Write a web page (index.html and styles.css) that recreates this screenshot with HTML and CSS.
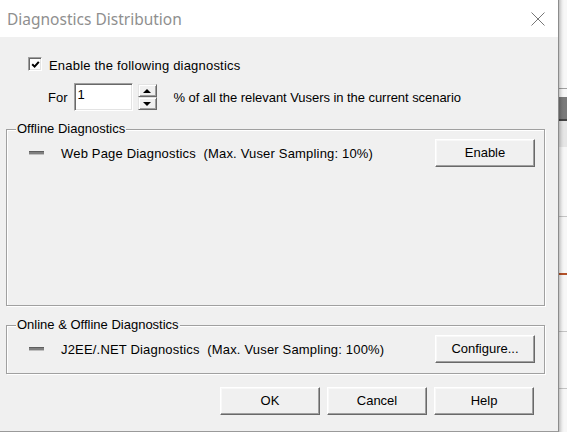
FILE: index.html
```html
<!DOCTYPE html>
<html>
<head>
<meta charset="utf-8">
<link rel="stylesheet" href="styles.css">
</head>
<body>
<div class="screen">
  <div class="dialog">
    <div class="titlebar">
      <span class="title">Diagnostics Distribution</span>
      <svg class="close" width="14" height="14" viewBox="0 0 14 14"><path d="M0.5 0.5 L13.5 13.5 M13.5 0.5 L0.5 13.5" stroke="#777" stroke-width="1" fill="none"/></svg>
    </div>
    <div class="body">
      <div class="check-row">
        <span class="checkbox"><svg width="9" height="9" viewBox="0 0 9 9"><path d="M1.2 4.2 L3.6 6.6 L7.8 1.8" stroke="#000" stroke-width="2" fill="none"/></svg></span>
        <span class="label wide">Enable the following diagnostics</span>
      </div>
      <div class="for-row">
        <span class="label">For</span>
        <span class="edit">1</span>
        <span class="spin">
          <span class="spin-btn"><span class="tri-up"></span></span>
          <span class="spin-btn"><span class="tri-down"></span></span>
        </span>
        <span class="label pct">% of all the relevant Vusers in the current scenario</span>
      </div>
      <div class="group group-offline">
        <span class="legend">Offline Diagnostics</span>
        <div class="item-row">
          <span class="dash"></span>
          <span class="item-text">Web Page Diagnostics&nbsp; (Max. Vuser Sampling: 10%)</span>
          <span class="btn">Enable</span>
        </div>
      </div>
      <div class="group group-online">
        <span class="legend">Online &amp; Offline Diagnostics</span>
        <div class="item-row">
          <span class="dash"></span>
          <span class="item-text">J2EE/.NET Diagnostics&nbsp; (Max. Vuser Sampling: 100%)</span>
          <span class="btn">Configure...</span>
        </div>
      </div>
      <div class="actions">
        <span class="btn">OK</span>
        <span class="btn">Cancel</span>
        <span class="btn">Help</span>
      </div>
    </div>
  </div>
  <div class="backdrop"></div>
</div>
</body>
</html>
```

FILE: styles.css
```css
* { box-sizing: border-box; }
html, body { margin: 0; padding: 0; }
body {
  width: 567px;
  height: 432px;
  overflow: hidden;
  font-family: "Liberation Sans", Arial, sans-serif;
  font-size: 13px;
  color: #000;
}
.screen {
  display: flex;
  width: 567px;
  height: 432px;
}
.dialog {
  width: 559px;
  height: 432px;
  display: flex;
  flex-direction: column;
  background: #f0f0f0;
  border-right: 1px solid #8c8c8c;
  border-bottom: 1px solid #9a9a9a;
}
.backdrop {
  flex: 1;
  background:
    linear-gradient(to right, rgba(0,0,0,0.22), rgba(0,0,0,0.05) 3px, rgba(0,0,0,0) 5px),
    linear-gradient(to bottom,
      #f7f7f7 0 88px, #a0a0a0 88px 89px, #f7f7f7 89px 97px,
      #7a7a7a 97px 119px, #444 119px 121px, #e6e6e6 121px 147px,
      #f7f7f7 147px 216px, #c4c4c4 216px 217px, #f7f7f7 217px 273px,
      #b5532a 273px 275px, #f7f7f7 275px 331px, #c4c4c4 331px 332px,
      #f7f7f7 332px 388px, #c4c4c4 388px 389px, #f7f7f7 389px);
}
.titlebar {
  height: 37px;
  background: #fff;
  display: flex;
  align-items: center;
  justify-content: space-between;
  padding: 0 13px 0 7px;
  flex-shrink: 0;
}
.title {
  font-family: "Noto Sans", "Open Sans", sans-serif;
  font-size: 15.5px;
  color: #8f8f8f;
}
.close { display: block; }
.body {
  flex: 1;
  display: flex;
  flex-direction: column;
}
.check-row {
  display: flex;
  align-items: center;
  margin-top: 20px;
  height: 14px;
  padding-left: 28px;
}
.checkbox {
  width: 14px;
  height: 14px;
  background: #fff;
  border: 1px solid;
  border-color: #a0a0a0 #fff #fff #a0a0a0;
  box-shadow: inset 1px 1px 0 #696969, inset -1px -1px 0 #e3e3e3;
  display: flex;
  align-items: center;
  justify-content: center;
}
.checkbox svg { display: block; }
.check-row .label { margin-left: 7px; padding-top: 2px; }
.wide { letter-spacing: 0.2px; }
.for-row {
  display: flex;
  align-items: center;
  margin-top: 12px;
  height: 28px;
  padding-left: 48px;
}
.edit {
  margin-left: 6px;
  width: 59px;
  height: 28px;
  background: #fff;
  border: 1px solid;
  border-color: #a0a0a0 #fff #fff #a0a0a0;
  box-shadow: inset 1px 1px 0 #696969, inset -1px -1px 0 #e3e3e3;
  padding: 4px 0 0 3px;
  line-height: 14px;
}
.spin {
  margin-left: 5px;
  width: 19px;
  height: 26px;
  display: flex;
  flex-direction: column;
}
.spin-btn {
  flex: 1;
  background: #f0f0f0;
  border: 1px solid;
  border-color: #e3e3e3 #696969 #696969 #e3e3e3;
  box-shadow: inset 1px 1px 0 #fff, inset -1px -1px 0 #a0a0a0;
  display: flex;
  align-items: center;
  justify-content: center;
}
.tri-up {
  width: 0; height: 0;
  border-left: 4px solid transparent;
  border-right: 4px solid transparent;
  border-bottom: 4px solid #000;
}
.tri-down {
  width: 0; height: 0;
  border-left: 4px solid transparent;
  border-right: 4px solid transparent;
  border-top: 4px solid #000;
}
.pct { margin-left: 17px; letter-spacing: -0.05px; }
.group {
  position: relative;
  margin-left: 6px;
  width: 539px;
  border: 1px solid #a0a0a0;
  box-shadow: 1px 1px 0 #fff, inset 1px 1px 0 #fff;
}
.group-offline {
  margin-top: 18px;
  height: 177px;
}
.group-online {
  margin-top: 19px;
  height: 49px;
}
.legend {
  position: absolute;
  left: 9px;
  top: -8px;
  padding: 0 1px;
  line-height: 14px;
  background: #f0f0f0;
}
.item-row {
  display: flex;
  align-items: center;
  padding: 9px 9px 0 22px;
}
.dash {
  width: 15px;
  height: 4px;
  background: linear-gradient(to bottom, #5e5e5e 0 1px, #808080 1px 3px, #c0c0c0 3px 4px);
}
.item-text {
  margin-left: 17px;
  flex: 1;
  letter-spacing: 0.18px;
}
.btn {
  width: 100px;
  height: 28px;
  display: flex;
  align-items: center;
  justify-content: center;
  background: #f0f0f0;
  border: 1px solid;
  border-color: #fff #696969 #696969 #fff;
  box-shadow: inset -1px -1px 0 #a0a0a0, inset 1px 1px 0 #f8f8f8;
  padding-bottom: 1px;
}
.actions {
  display: flex;
  justify-content: flex-end;
  gap: 7px;
  margin-top: 13px;
  padding-right: 24px;
}
```
